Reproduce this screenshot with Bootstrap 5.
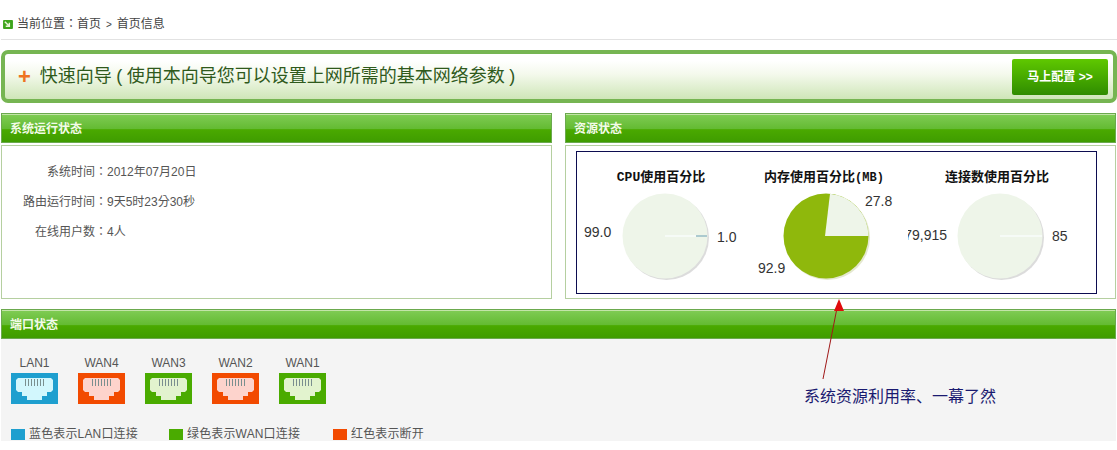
<!DOCTYPE html>
<html lang="zh-CN">
<head>
  <meta charset="UTF-8" />
  <meta name="viewport" content="width=device-width, initial-scale=1" />
  <title>首页信息</title>
  <link href="https://cdn.jsdelivr.net/npm/bootstrap@5.3.2/dist/css/bootstrap.min.css" rel="stylesheet" />
  <style>
    body {
      font-family: "Liberation Sans", "Noto Sans CJK SC", sans-serif;
      font-size: 12px;
      color: #555;
      background: #fff;
      overflow: hidden;
    }
    .page-wrap { position: relative; width: 1117px; height: 450px; padding-left: 1px; }
    .crumb-bar { height: 40px; padding: 9px 0 0 2px; border-bottom: 1px solid #e2e2e2; color: #444; gap: 4px; font-family: "Liberation Sans", "Noto Sans CJK TC", sans-serif; }
    .crumb-sep { font-size: 10px; margin: 0 5px; }

    .wizard-box {
      height: 53px;
      margin-top: 10px;
      border: 4px solid #76b552;
      border-radius: 7px;
      background: linear-gradient(#fff 15%, #f4f9ec 45%, #cfe6b8);
      padding: 0 5px 0 13px;
    }
    .wizard-plus { color: #ee7322; font-size: 22px; font-weight: 700; line-height: 1; margin-right: 9px; }
    .wizard-text { color: #2f5a1c; font-size: 18px; word-spacing: -.5px; }
    .wizard-btn {
      width: 96px;
      height: 36px;
      padding: 0;
      border: 0;
      border-radius: 2px;
      background: linear-gradient(#5fc800, #2f8c00);
      color: #fff;
      font-size: 12px;
      font-weight: 700;
    }

    .panel-head {
      height: 30px;
      padding: 2px 0 0 8px;
      border: 1px solid #6ba94e;
      box-shadow: inset 0 1px 0 #c3e4a8;
      background: linear-gradient(#80cc55, #64bb33 52%, #4aa900 56%, #3f9c00);
      color: #f4fbe9;
      font-weight: 700;
      font-size: 12px;
    }
    .status-panels { margin-top: 10px; gap: 13px; width: 1115px; }
    .status-panel { width: 551px; }
    .panel-body-box { height: 154px; margin-top: 2px; border: 1px solid #b5cfa0; }
    .info-list { padding-top: 11px; font-family: "Liberation Sans", "Noto Sans CJK TC", sans-serif; }
    .info-row { height: 30px; }
    .info-label { width: 105px; text-align: right; }

    .chart-frame { width: 521px; height: 143px; margin: 5px 0 0 10px; border: 1px solid #0c0c50; }
    .chart-frame svg { display: block; height: 141px; }
    .pie-title { font-family: "Liberation Mono", "Noto Sans CJK SC", monospace; font-size: 13px; font-weight: 700; fill: #111; text-anchor: middle; }
    .pie-unit { font-size: 12px; }
    .pie-num { font-size: 14px; fill: #333; }

    .ports-panel { width: 1115px; margin-top: 10px; }
    .ports-body { height: 102px; background: #f4f4f4; padding: 15px 0 0 10px; }
    .port-list { gap: 20px; }
    .port-item { width: 47px; text-align: center; line-height: 18px; }
    .port-icon { display: block; width: 47px; height: 31px; margin-top: 1px; background: var(--port-bg); color: var(--port-fg); }
    .port-blue { --port-bg: #1e9fcf; --port-fg: #d2f7fd; }
    .port-red { --port-bg: #f24a00; --port-fg: #fdd3cc; }
    .port-green { --port-bg: #4aab00; --port-fg: #e2f3ce; }
    .legend-row { margin-top: 23px; line-height: 14px; letter-spacing: .15px; }
    .legend-item { width: 158px; gap: 4px; }
    .legend-item.wide { width: 164px; }
    .legend-swatch { width: 14px; height: 11px; background: var(--port-bg); }

    .note-arrow { position: absolute; left: 815px; top: 295px; }
    .note-text { position: absolute; left: 804px; top: 386px; font-size: 16px; line-height: 22px; color: #1a1a70; white-space: nowrap; }
  </style>
</head>
<body>
  <svg width="0" height="0" class="position-absolute">
    <symbol id="rj45" viewBox="0 0 47 31">
      <polygon fill="currentColor" points="7,5 40,5 42,7 42,17 40,19 36,19 36,23 31,23 31,27 16,27 16,23 11,23 11,19 7,19 5,17 5,7" />
      <path stroke="#7a8f8f" stroke-width="1" d="M14.5 6v7M17.5 6v7M20.5 6v7M23.5 6v7M26.5 6v7M29.5 6v7M32.5 6v7" />
    </symbol>
  </svg>

  <div class="page-wrap">
    <!-- 当前位置 -->
    <div class="crumb-bar d-flex align-items-center" lang="zh-Hant">
      <svg width="10" height="9" viewBox="0 0 11 10">
        <rect width="11" height="10" rx="1" fill="#3fa51c" />
        <path d="M2 2l5 5M7 3v4H3" fill="none" stroke="#eaf7d8" stroke-width="1.6" />
      </svg>
      <span>当前位置：首页<span class="crumb-sep">&gt;</span>首页信息</span>
    </div>

    <!-- 快速向导 -->
    <div class="wizard-box d-flex align-items-center">
      <span class="wizard-plus">+</span>
      <span class="wizard-text flex-grow-1">快速向导 ( 使用本向导您可以设置上网所需的基本网络参数 )</span>
      <button type="button" class="btn wizard-btn">马上配置 &gt;&gt;</button>
    </div>

    <div class="status-panels d-flex">
      <div class="status-panel">
        <div class="panel-head d-flex align-items-center">系统运行状态</div>
        <div class="panel-body-box info-list" lang="zh-Hant">
          <div class="info-row d-flex align-items-center"><span class="info-label">系统时间：</span><span>2012年07月20日</span></div>
          <div class="info-row d-flex align-items-center"><span class="info-label">路由运行时间：</span><span>9天5时23分30秒</span></div>
          <div class="info-row d-flex align-items-center"><span class="info-label">在线用户数：</span><span>4人</span></div>
        </div>
      </div>
      <div class="status-panel">
        <div class="panel-head d-flex align-items-center">资源状态</div>
        <div class="panel-body-box">
          <div class="chart-frame d-flex">
            <svg width="173" viewBox="577 152 173 141">
              <text class="pie-title" x="661" y="181">CPU使用百分比</text>
              <circle cx="666.5" cy="237.5" r="42.5" fill="#dcdcdc" />
              <circle cx="665" cy="236" r="42.5" fill="#eef5e9" />
              <path d="M665 236H696" stroke="#f8fcfb" stroke-width="1.5" />
              <path d="M696 236H707" stroke="#6a9fb5" stroke-width="1" />
              <text class="pie-num" x="584" y="237">99.0</text>
              <text class="pie-num" x="717" y="242">1.0</text>
            </svg>
            <svg width="158" viewBox="750 152 158 141">
              <text class="pie-title" x="824" y="181">内存使用百分比<tspan class="pie-unit">(MB)</tspan></text>
              <circle cx="827.5" cy="237.5" r="42.5" fill="#e4e8cf" />
              <circle cx="826" cy="236" r="42.5" fill="#8fb80c" />
              <path d="M825 236L830 193.7A42.5 42.5 0 0 1 868.5 236Z" fill="#eef5e9" />
              <text class="pie-num" x="865" y="206">27.8</text>
              <text class="pie-num" x="758" y="273">92.9</text>
            </svg>
            <svg width="188" viewBox="908 152 188 141">
              <text class="pie-title" x="997" y="181">连接数使用百分比</text>
              <circle cx="1001.5" cy="237.5" r="42.5" fill="#dcdcdc" />
              <circle cx="1000" cy="236" r="42.5" fill="#eef5e9" />
              <path d="M1000 236H1042" stroke="#f8fcfb" stroke-width="1.5" />
              <text class="pie-num" x="947" y="240" text-anchor="end">79,915</text>
              <text class="pie-num" x="1052" y="241">85</text>
            </svg>
          </div>
        </div>
      </div>
    </div>

    <!-- 端口状态 -->
    <div class="ports-panel">
      <div class="panel-head d-flex align-items-center">端口状态</div>
      <div class="ports-body">
        <div class="port-list d-flex">
          <div class="port-item port-blue">LAN1<svg class="port-icon"><use href="#rj45" /></svg></div>
          <div class="port-item port-red">WAN4<svg class="port-icon"><use href="#rj45" /></svg></div>
          <div class="port-item port-green">WAN3<svg class="port-icon"><use href="#rj45" /></svg></div>
          <div class="port-item port-red">WAN2<svg class="port-icon"><use href="#rj45" /></svg></div>
          <div class="port-item port-green">WAN1<svg class="port-icon"><use href="#rj45" /></svg></div>
        </div>
        <div class="legend-row d-flex">
          <div class="legend-item port-blue d-flex align-items-center"><span class="legend-swatch"></span>蓝色表示LAN口连接</div>
          <div class="legend-item wide port-green d-flex align-items-center"><span class="legend-swatch"></span>绿色表示WAN口连接</div>
          <div class="legend-item port-red d-flex align-items-center"><span class="legend-swatch"></span>红色表示断开</div>
        </div>
      </div>
    </div>

    <!-- 标注 -->
    <svg class="note-arrow" width="40" height="90" viewBox="815 295 40 90">
      <path d="M823 379L837 308" stroke="#a01818" stroke-width="1" fill="none" />
      <polygon points="839,299 844,311 834,311" fill="#e00c0c" />
    </svg>
    <div class="note-text">系统资源利用率、一幕了然</div>
  </div>

  <script src="https://cdn.jsdelivr.net/npm/bootstrap@5.3.2/dist/js/bootstrap.bundle.min.js"></script>
</body>
</html>
